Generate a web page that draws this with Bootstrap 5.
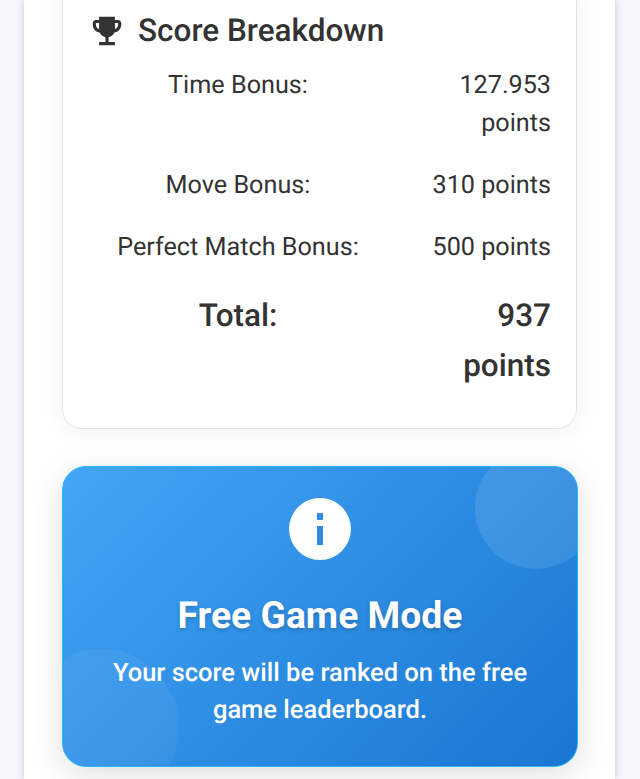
<!DOCTYPE html>
<html lang="en">
<head>
    <meta charset="UTF-8">
    <title>Game Results</title>
    <link href="https://cdn.jsdelivr.net/npm/bootstrap@5.3.3/dist/css/bootstrap.min.css" rel="stylesheet">
    <style>
        html, body { height: 779px; overflow: hidden; }
        body { background: #f4f6fb; font-family: Roboto, "Liberation Sans", sans-serif; color: #333; text-rendering: geometricPrecision; }
        .page-panel { width: 591px; height: 779px; margin-left: 24px; padding: 1px 38px 0; background: #fff; box-shadow: 0 0 6px rgba(40, 50, 80, .25); }
        .score-box { margin-top: -21px; height: 449px; padding: 30px 25px 0 25px; background: #fff; border: 1px solid #e4e4e4; border-radius: 20px; box-shadow: 0 4px 24px rgba(0, 0, 0, .06); }
        .score-title { font-size: 31.5px; line-height: 40px; font-weight: 500; margin: 0 0 16px; }
        .score-title svg { width: 38px; height: 38px; fill: #333; flex: none; }
        .score-row { display: grid; grid-template-columns: 300px 163px; font-size: 25.2px; line-height: 38px; padding-bottom: 24px; }
        .score-row > div:first-child { text-align: center; }
        .score-row > div:last-child { text-align: right; }
        .score-total { font-size: 31.5px; line-height: 50px; font-weight: 500; padding-bottom: 0; }
        .mode-box { position: relative; overflow: hidden; width: 516px; height: 301px; margin-top: 37px; padding-top: 31px; color: #fff; text-align: center; background: linear-gradient(135deg, #42a5f5, #1976d2); border: 1px solid #29b6f6; border-radius: 24px; box-shadow: 0 8px 32px rgba(0, 0, 0, .13); }
        .bubble { position: absolute; border-radius: 50%; }
        .bubble-top { width: 122px; height: 122px; top: -20px; right: -20px; background: rgba(255, 255, 255, .1); }
        .bubble-bottom { width: 156px; height: 156px; bottom: -39px; left: -40px; background: rgba(255, 255, 255, .05); }
        .info-icon { position: relative; width: 62px; height: 62px; display: block; margin: 0 auto; }
        .mode-title { position: relative; font-size: 37.3px; line-height: 48px; font-weight: 700; margin: 32px 0 15px; text-shadow: 0 2px 4px rgba(0, 0, 0, .2); }
        .mode-text { position: relative; font-size: 25.5px; line-height: 37px; font-weight: 500; margin: 0 auto; width: 460px; }
    </style>
</head>
<body>
<div class="page-panel">
    <!-- Score card -->
    <div class="score-box">
        <h3 class="score-title d-flex align-items-center gap-2">
            <svg viewBox="0 0 24 24" aria-hidden="true"><path d="M19 5h-2V3H7v2H5c-1.1 0-2 .9-2 2v1c0 2.55 1.92 4.63 4.39 4.94.63 1.5 1.98 2.63 3.61 2.96V19H7v2h10v-2h-4v-3.1c1.63-.33 2.98-1.46 3.61-2.96C19.08 12.63 21 10.55 21 8V7c0-1.1-.9-2-2-2zM5 8V7h2v3.82C5.84 10.4 5 9.3 5 8zm14 0c0 1.3-.84 2.4-2 2.82V7h2v1z"/></svg>
            <span class="ms-1">Score Breakdown</span>
        </h3>
        <div class="score-row"><div>Time Bonus:</div><div>127.953 points</div></div>
        <div class="score-row"><div>Move Bonus:</div><div>310 points</div></div>
        <div class="score-row"><div>Perfect Match Bonus:</div><div>500 points</div></div>
        <div class="score-row score-total"><div>Total:</div><div>937<br>points</div></div>
    </div>

    <!-- Mode card -->
    <div class="mode-box">
        <div class="bubble bubble-top"></div>
        <div class="bubble bubble-bottom"></div>
        <svg class="info-icon" viewBox="0 0 62 62" aria-hidden="true">
            <circle cx="31" cy="31" r="31" fill="#fff"/>
            <rect x="28" y="15" width="6" height="7" fill="#2f8ce6"/>
            <rect x="28" y="28" width="6" height="19" fill="#2f8ce6"/>
        </svg>
        <h2 class="mode-title">Free Game Mode</h2>
        <p class="mode-text">Your score will be ranked on the free game leaderboard.</p>
    </div>
</div>
</body>
</html>
